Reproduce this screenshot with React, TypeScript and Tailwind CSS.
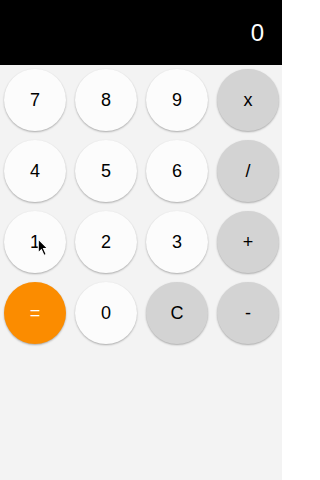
import React from "react";

type Key = { label: string; kind: "num" | "op" | "eq" };

const keys: Key[] = [
  { label: "7", kind: "num" },
  { label: "8", kind: "num" },
  { label: "9", kind: "num" },
  { label: "x", kind: "op" },
  { label: "4", kind: "num" },
  { label: "5", kind: "num" },
  { label: "6", kind: "num" },
  { label: "/", kind: "op" },
  { label: "1", kind: "num" },
  { label: "2", kind: "num" },
  { label: "3", kind: "num" },
  { label: "+", kind: "op" },
  { label: "=", kind: "eq" },
  { label: "0", kind: "num" },
  { label: "C", kind: "op" },
  { label: "-", kind: "op" },
];

function KeyButton({ k }: { k: Key }) {
  const color =
    k.kind === "eq"
      ? "bg-[#fb8c00] text-white"
      : k.kind === "op"
      ? "bg-[#d3d3d3] text-black"
      : "bg-[#fcfcfc] text-black";
  return (
    <button
      className={`relative flex h-[62px] w-[62px] items-center justify-center rounded-full text-[18px] shadow-[0_1px_2px_rgba(0,0,0,0.3)] ${color}`}
    >
      {k.label}
      {k.label === "1" && (
        <svg
          className="absolute left-[33px] top-[27px]"
          width="12"
          height="19"
          viewBox="0 0 11 18"
        >
          <path
            d="M1 1 L1 14 L4 11 L6.5 16.5 L8.5 15.5 L6 10 L10 10 Z"
            fill="#000"
            stroke="#fff"
            strokeWidth="1"
          />
        </svg>
      )}
    </button>
  );
}

export default function App() {
  return (
    <div
      className="flex h-[480px] w-[282px] flex-col bg-[#f3f3f3]"
      style={{ fontFamily: '"Liberation Sans", Arial, sans-serif' }}
    >
      <div className="flex h-[65px] items-center justify-end bg-black pr-[18px] text-[24px] text-white">
        0
      </div>
      <div className="grid w-[283px] grid-cols-4 gap-x-[9px] gap-y-[9px] px-[4px] pt-[4px]">
        {keys.map((k) => (
          <KeyButton key={k.label} k={k} />
        ))}
      </div>
    </div>
  );
}
